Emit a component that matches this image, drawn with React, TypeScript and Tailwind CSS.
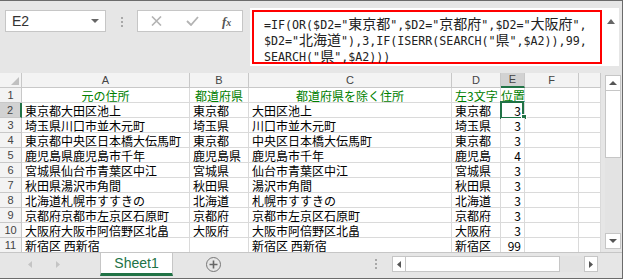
import React from "react";

// spreadsheet rows: A, B, C, D, E
const rows: [string, string, string, string, string][] = [
  ["東京都大田区池上", "東京都", "大田区池上", "東京都", "3"],
  ["埼玉県川口市並木元町", "埼玉県", "川口市並木元町", "埼玉県", "3"],
  ["東京都中央区日本橋大伝馬町", "東京都", "中央区日本橋大伝馬町", "東京都", "3"],
  ["鹿児島県鹿児島市千年", "鹿児島県", "鹿児島市千年", "鹿児島", "4"],
  ["宮城県仙台市青葉区中江", "宮城県", "仙台市青葉区中江", "宮城県", "3"],
  ["秋田県湯沢市角間", "秋田県", "湯沢市角間", "秋田県", "3"],
  ["北海道札幌市すすきの", "北海道", "札幌市すすきの", "北海道", "3"],
  ["京都府京都市左京区石原町", "京都府", "京都市左京区石原町", "京都府", "3"],
  ["大阪府大阪市阿倍野区北畠", "大阪府", "大阪市阿倍野区北畠", "大阪府", "3"],
  ["新宿区 西新宿", "", "新宿区 西新宿", "新宿区", "99"],
];

const formula = [
  '=IF(OR($D2="東京都",$D2="京都府",$D2="大阪府",',
  '$D2="北海道"),3,IF(ISERR(SEARCH("県",$A2)),99,',
  'SEARCH("県",$A2)))',
];

function FormulaLine({ text }: { text: string }) {
  const parts = text.split(/([\u3040-\u9fff]+)/);
  return (
    <div className="h-[16px] leading-[16px] whitespace-pre">
      {parts.map((p, i) =>
        /[\u3040-\u9fff]/.test(p) ? (
          <span key={i} className="text-[14px] font-['Noto_Sans_CJK_JP',sans-serif]">{p}</span>
        ) : (
          <span key={i}>{p}</span>
        )
      )}
    </div>
  );
}

function Dots() {
  return (
    <div className="flex flex-col gap-[2px]">
      <span className="w-[2px] h-[2px] bg-[#a8a8a8]" />
      <span className="w-[2px] h-[2px] bg-[#a8a8a8]" />
      <span className="w-[2px] h-[2px] bg-[#a8a8a8]" />
    </div>
  );
}

const head = "bg-[#f3f3f3] border-r border-b border-[#c8c8c8] text-[#444] text-[11px] font-['Liberation_Sans',sans-serif] flex items-center justify-center";
const cell = "bg-white border-r border-b border-[#dadada] text-[12px] leading-[15px] whitespace-nowrap overflow-visible";
const green = `${cell} text-[#008000]`;
const plain = `${cell} text-black`;

export default function App() {
  return (
    <div className="w-[623px] h-[279px] overflow-hidden bg-[#e6e6e6] border-t border-r border-b border-[#6b6b6b] flex flex-col font-['Noto_Sans_CJK_JP',sans-serif]">
      {/* Formula bar */}
      <div className="h-[72px] flex items-start shrink-0">
        <div className="mt-[9px] ml-[5px] w-[101px] h-[22px] bg-white border border-[#c6c6c6] flex items-center justify-between pl-[6px] pr-[6px]">
          <span className="text-[14px] text-[#333] font-['Liberation_Sans',sans-serif] leading-none">E2</span>
          <svg width="8" height="4" viewBox="0 0 8 4"><path d="M0 0h8L4 4z" fill="#666" /></svg>
        </div>
        <div className="w-[31px] mt-[16px] flex justify-center">
          <Dots />
        </div>
        <div className="mt-[9px] w-[106px] h-[22px] bg-white border border-[#c6c6c6] flex items-center pl-[13px]">
          <svg width="11" height="10" viewBox="0 0 11 10">
            <path d="M1 0.5l9 9M10 0.5l-9 9" stroke="#b3b3b3" strokeWidth="1.6" />
          </svg>
          <svg className="ml-[24px]" width="13" height="10" viewBox="0 0 13 10">
            <path d="M1 5l4 4 7-8" stroke="#b3b3b3" strokeWidth="1.8" fill="none" />
          </svg>
          <span className="ml-[23px] text-[13px] italic font-bold text-[#555] font-['Liberation_Serif',serif] leading-none">
            f<span className="text-[10px]">x</span>
          </span>
        </div>
        <div className="mt-[7px] ml-[7px] w-[369px] h-[58px] bg-white flex">
          <div className="ml-[2px] mt-[2px] w-[350px] h-[54px] border-2 border-[#ff0000] pl-[10px] pt-[3px] text-[11.67px] text-[#222] font-['DejaVu_Sans_Mono',monospace]">
            {formula.map((l) => (
              <FormulaLine key={l} text={l} />
            ))}
          </div>
          <div className="flex-1 flex justify-center pt-[11px]">
            <svg width="8" height="5" viewBox="0 0 8 5"><path d="M0 5h8L4 0z" fill="#666" /></svg>
          </div>
        </div>
      </div>

      {/* Sheet */}
      <div className="h-[179px] flex shrink-0">
        <div className="w-[601px] overflow-hidden">
          <div className="grid grid-cols-[22px_168px_59px_203px_49px_24px_54px_22px] auto-rows-[15px]">
            {/* column headers */}
            <div className={`${head} relative`}>
              <svg className="absolute right-[2px] bottom-[2px]" width="8" height="8" viewBox="0 0 8 8">
                <path d="M8 0v8H0z" fill="#c0c0c0" />
              </svg>
            </div>
            <div className={head}>A</div>
            <div className={head}>B</div>
            <div className={head}>C</div>
            <div className={head}>D</div>
            <div className="bg-[#d2d2d2] border-r border-[#c8c8c8] border-b-2 border-b-[#217346] text-[#444] text-[11px] font-['Liberation_Sans',sans-serif] flex items-center justify-center">E</div>
            <div className={head}>F</div>
            <div className={head}></div>

            {/* row 1 */}
            <div className={head}>1</div>
            <div className={`${green} text-center`}>元の住所</div>
            <div className={`${green} text-center`}>都道府県</div>
            <div className={`${green} text-center`}>都道府県を除く住所</div>
            <div className={`${green} pl-[3px]`}>左3文字</div>
            <div className={green}>位置</div>
            <div className={plain}></div>
            <div className={plain}></div>

            {rows.map((r, i) => {
              const n = i + 2;
              const sel = n === 2;
              return (
                <React.Fragment key={n}>
                  <div
                    className={
                      sel
                        ? "bg-[#d2d2d2] border-r-2 border-r-[#217346] border-b border-b-[#c8c8c8] text-[#444] text-[11px] font-['Liberation_Sans',sans-serif] flex items-center justify-center"
                        : head
                    }
                  >
                    {n}
                  </div>
                  <div className={`${plain} pl-[3px]`}>{r[0]}</div>
                  <div className={`${plain} pl-[3px]`}>{r[1]}</div>
                  <div className={`${plain} pl-[3px]`}>{r[2]}</div>
                  <div className={`${plain} pl-[3px]`}>{r[3]}</div>
                  <div className={`${plain} text-right pr-[3px] relative`}>
                    {r[4]}
                    {sel && (
                      <>
                        <div className="absolute -left-[1px] -top-[2px] right-[0px] -bottom-[2px] border-2 border-[#217346]" />
                        <div className="absolute -right-[3px] -bottom-[3px] w-[6px] h-[6px] bg-[#217346] border border-white" />
                      </>
                    )}
                  </div>
                  <div className={plain}></div>
                  <div className={plain}></div>
                </React.Fragment>
              );
            })}
          </div>
        </div>

        {/* vertical scrollbar */}
        <div className="flex-1 pl-[4px] pr-[1px] pt-[2px]">
          <div className="w-[16px] h-[174px] flex flex-col">
            <div className="h-[16px] bg-white border border-[#c6c6c6] flex items-center justify-center">
              <svg width="8" height="4" viewBox="0 0 8 4"><path d="M0 4h8L4 0z" fill="#555" /></svg>
            </div>
            <div className="h-[67px] bg-white border-x border-b border-[#c6c6c6]" />
            <div className="flex-1 bg-[#e3e3e3]" />
            <div className="h-[16px] bg-white border border-[#c6c6c6] flex items-center justify-center">
              <svg width="8" height="4" viewBox="0 0 8 4"><path d="M0 0h8L4 4z" fill="#555" /></svg>
            </div>
          </div>
        </div>
      </div>

      {/* Sheet tabs */}
      <div className="flex-1 border-t border-[#c6c6c6] flex items-start">
        <div className="w-[100px] h-[23px] flex items-center">
          <svg className="ml-[28px]" width="4" height="7" viewBox="0 0 4 7"><path d="M4 0v7L0 3.5z" fill="#c4c4c4" /></svg>
          <svg className="ml-[24px]" width="4" height="7" viewBox="0 0 4 7"><path d="M0 0v7l4-3.5z" fill="#c4c4c4" /></svg>
        </div>
        <div className="w-[73px] h-[23px] bg-white border-x border-[#c6c6c6] border-b-[3px] border-b-[#217346] flex items-center justify-center text-[14px] text-[#217346] font-['Liberation_Sans',sans-serif]">
          Sheet1
        </div>
        <div className="ml-[33px] mt-[4px] w-[15px] h-[15px] rounded-full border-[1.5px] border-[#777] flex items-center justify-center">
          <svg width="9" height="9" viewBox="0 0 9 9"><path d="M4.5 0.5v8M0.5 4.5h8" stroke="#666" strokeWidth="1.6" /></svg>
        </div>
        <div className="ml-[154px] mt-[6px]">
          <Dots />
        </div>
        <div className="ml-[15px] mt-[3px] w-[206px] h-[16px] flex">
          <div className="w-[14px] h-[16px] bg-white border border-[#c6c6c6] flex items-center justify-center">
            <svg width="4" height="7" viewBox="0 0 4 7"><path d="M4 0v7L0 3.5z" fill="#555" /></svg>
          </div>
          <div className="w-[154px] bg-white border-y border-r border-[#c6c6c6]" />
          <div className="flex-1 bg-[#e3e3e3]" />
          <div className="w-[14px] h-[16px] bg-white border border-[#c6c6c6] flex items-center justify-center">
            <svg width="4" height="7" viewBox="0 0 4 7"><path d="M0 0v7l4-3.5z" fill="#555" /></svg>
          </div>
        </div>
      </div>
    </div>
  );
}
